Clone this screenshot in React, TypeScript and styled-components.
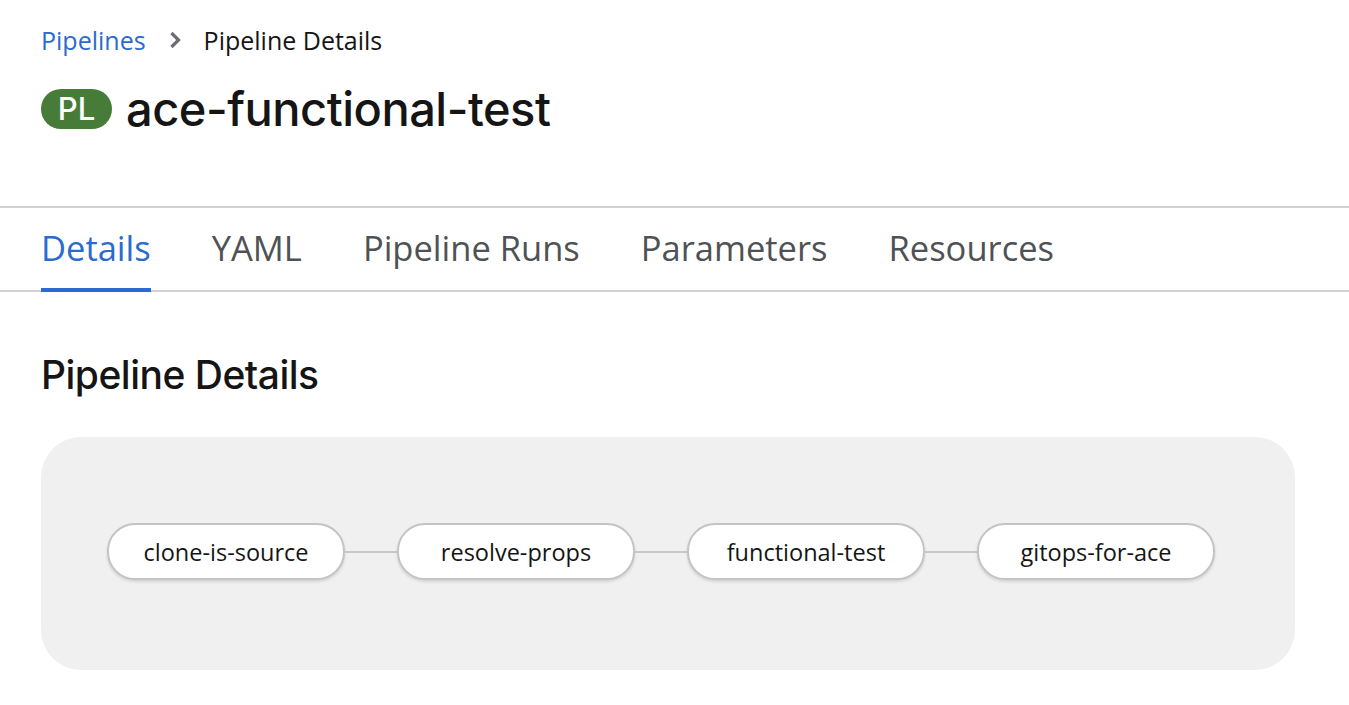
import React from "react";
import styled, { createGlobalStyle } from "styled-components";

const Global = createGlobalStyle`
  html, body { margin: 0; padding: 0; background: #fff; }
  body { font-family: "Open Sans", "Noto Sans", sans-serif; color: #151515; }
`;

const Page = styled.div`
  display: flex;
  flex-direction: column;
  width: 1349px;
`;

const Header = styled.div`
  display: flex;
  flex-direction: column;
  padding: 21px 41px 0;
  height: 206px;
  box-sizing: border-box;
`;

const Breadcrumb = styled.nav`
  display: flex;
  align-items: center;
  gap: 23px;
  font-size: 25px;
  line-height: 38px;
`;

const Crumb = styled.a`
  color: #2b6bd0;
  text-decoration: none;
`;

const Current = styled.span`
  color: #151515;
`;

const TitleRow = styled.h1`
  display: flex;
  align-items: center;
  gap: 14px;
  margin: 22px 0 0;
  font-family: "Inter", sans-serif;
  font-weight: 500;
  font-size: 47px;
  line-height: 56px;
  letter-spacing: -0.5px;
  color: #151515;
`;

const Badge = styled.span`
  display: inline-flex;
  align-items: center;
  justify-content: center;
  width: 71px;
  height: 40px;
  border-radius: 20px;
  background: #467b38;
  color: #fff;
  font-family: "Inter", sans-serif;
  font-size: 31px;
  font-weight: 500;
  letter-spacing: 0;
`;

const Tabs = styled.div`
  display: flex;
  gap: 61px;
  padding: 0 41px;
  border-top: 2px solid #d2d2d2;
  border-bottom: 2px solid #d2d2d2;
  height: 86px;
  box-sizing: border-box;
`;

const Tab = styled.div<{ $active?: boolean }>`
  display: flex;
  align-items: center;
  font-size: 34.5px;
  color: ${(p) => (p.$active ? "#2b6bd0" : "#4f5255")};
  box-shadow: ${(p) => (p.$active ? "inset 0 -4px 0 #2b6bd0" : "none")};
  margin-bottom: -2px;
  padding-bottom: 6px;
`;

const Section = styled.section`
  display: flex;
  flex-direction: column;
  padding: 59px 0 0 41px;
`;

const SectionTitle = styled.h2`
  margin: 0;
  font-family: "Inter", sans-serif;
  font-weight: 500;
  font-size: 39px;
  line-height: 48px;
  letter-spacing: -0.5px;
  color: #151515;
`;

const Graph = styled.div`
  margin-top: 38px;
  width: 1254px;
  height: 233px;
  background: #f0f0f0;
  border-radius: 40px;
  display: flex;
  align-items: center;
  padding: 0 66px 4px;
  box-sizing: border-box;
`;

const Node = styled.div`
  width: 238px;
  height: 57px;
  box-sizing: border-box;
  border: 2px solid #c4c4c6;
  border-radius: 28px;
  background: #fff;
  box-shadow: 0 2px 3px rgba(0, 0, 0, 0.12);
  display: flex;
  align-items: center;
  justify-content: center;
  font-size: 23.5px;
  color: #151515;
  flex-shrink: 0;
`;

const Edge = styled.div`
  width: 52px;
  height: 2px;
  background: #c8c8c8;
  flex-shrink: 0;
`;

const Chevron = () => (
  <svg width="12" height="18" viewBox="0 0 12 18">
    <path d="M2.5 2 L9.5 9 L2.5 16" fill="none" stroke="#6a6e73" strokeWidth="3.2" />
  </svg>
);

const tasks = ["clone-is-source", "resolve-props", "functional-test", "gitops-for-ace"];

export default function App() {
  return (
    <Page>
      <Global />
      <Header>
        <Breadcrumb>
          <Crumb href="#">Pipelines</Crumb>
          <Chevron />
          <Current>Pipeline Details</Current>
        </Breadcrumb>
        <TitleRow>
          <Badge>PL</Badge>
          ace-functional-test
        </TitleRow>
      </Header>
      <Tabs>
        <Tab $active>Details</Tab>
        <Tab>YAML</Tab>
        <Tab>Pipeline Runs</Tab>
        <Tab>Parameters</Tab>
        <Tab>Resources</Tab>
      </Tabs>
      <Section>
        <SectionTitle>Pipeline Details</SectionTitle>
        <Graph>
          {tasks.map((t, i) => (
            <React.Fragment key={t}>
              {i > 0 && <Edge />}
              <Node>{t}</Node>
            </React.Fragment>
          ))}
        </Graph>
      </Section>
    </Page>
  );
}
